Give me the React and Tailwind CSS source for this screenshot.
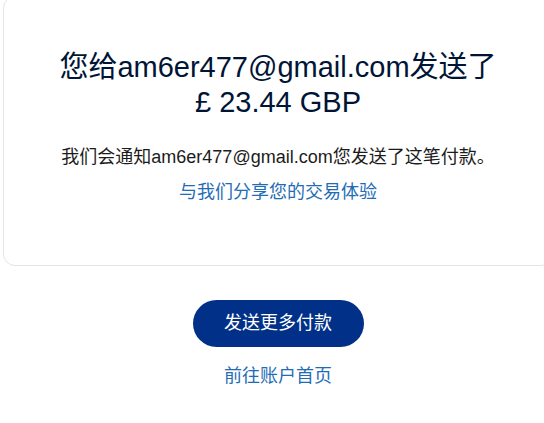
const FONT = { fontFamily: '"Liberation Sans", "Noto Sans CJK SC", sans-serif' };

export default function App() {
  return (
    <div className="w-[544px] h-[423px] overflow-hidden bg-white" style={FONT}>
      <div className="ml-[3px] w-[550px]">
        <div className="-mt-1 rounded-xl border border-[#e5e5e5] pt-[53px] pb-[59px] text-center">
          <h1 className="text-[29px] leading-[35px] text-[#001435]">
            您给am6er477@gmail.com发送了
            <br />£ 23.44 GBP
          </h1>
          <p className="mt-6 text-[18px] leading-[27px] text-[#1c1c1c]">
            我们会通知am6er477@gmail.com您发送了这笔付款。
          </p>
          <a href="#" className="mt-2 block text-[18px] leading-[27px] text-[#1f6db5]">
            与我们分享您的交易体验
          </a>
        </div>
        <div className="flex flex-col items-center pt-[34px]">
          <button className="h-[47px] w-[171px] rounded-full bg-[#003087] text-[18px] text-white">
            发送更多付款
          </button>
          <a href="#" className="mt-4 text-[18px] leading-[27px] text-[#1f6db5]">
            前往账户首页
          </a>
        </div>
      </div>
    </div>
  );
}
